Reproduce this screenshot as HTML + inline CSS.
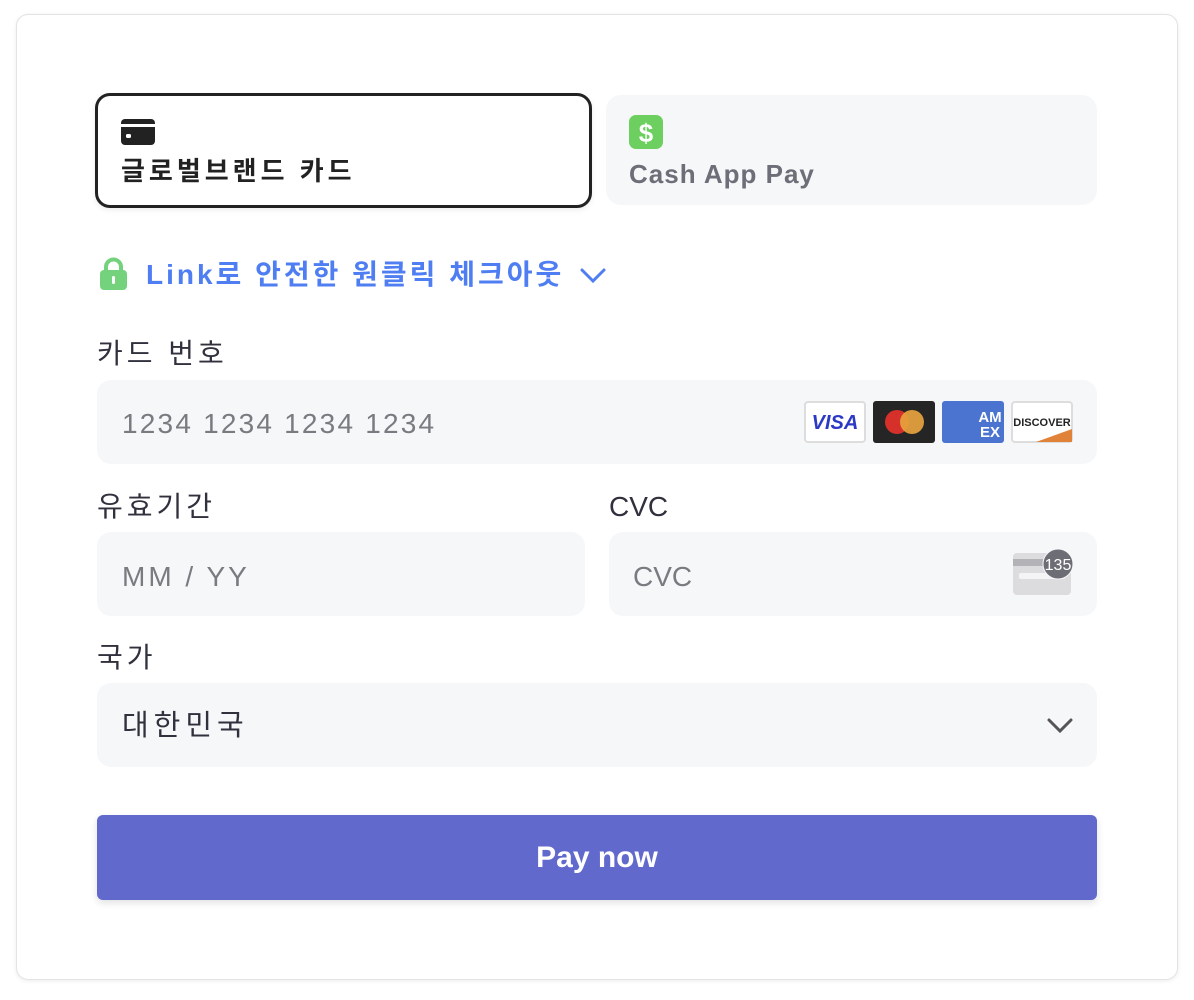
<!DOCTYPE html>
<html><head><meta charset="utf-8"><style>
*{box-sizing:border-box;margin:0;padding:0}
body{width:1194px;height:1000px;background:#fff;font-family:"Liberation Sans","Noto Sans CJK KR",sans-serif;position:relative;overflow:hidden}
.a{position:absolute}
.card{left:16px;top:14px;width:1162px;height:966px;border:1px solid #e3e3e6;border-radius:12px;box-shadow:0 1px 4px rgba(0,0,0,.08)}
.inp{background:#f6f7f9;border-radius:14px;height:84px}
.lbl{font-size:28px;color:#30313d;line-height:1;letter-spacing:4px}
.ph{font-size:28px;color:#7a7b80;line-height:1}
</style></head><body>
<div class="a card"></div>
<div class="a" style="left:95px;top:93px;width:497px;height:115px;border:3px solid #222;border-radius:15px;box-shadow:0 2px 6px rgba(0,0,0,.08)"></div>
<svg class="a" style="left:121px;top:119px" width="34" height="26" viewBox="0 0 34 26"><rect x="0" y="0" width="34" height="26" rx="4" fill="#222"/><rect x="0" y="5" width="34" height="3" fill="#fff"/><rect x="5" y="15" width="5" height="4" rx="1.5" fill="#fff"/></svg>
<div class="a" style="left:121px;top:157px;font-size:26px;font-weight:bold;color:#222;line-height:1.1;letter-spacing:4px">글로벌브랜드 카드</div>
<div class="a" style="left:606px;top:95px;width:491px;height:110px;background:#f6f7f9;border-radius:15px"></div>
<svg class="a" style="left:629px;top:115px" width="34" height="34" viewBox="0 0 34 34"><rect width="34" height="34" rx="7" fill="#6ccf5f"/><text x="17" y="27" font-size="26" font-weight="bold" fill="#fff" text-anchor="middle" font-family="Liberation Sans">$</text></svg>
<div class="a" style="left:629px;top:160px;font-size:26px;font-weight:bold;color:#6d6e78;line-height:1.1;letter-spacing:1px">Cash App Pay</div>
<svg class="a" style="left:99px;top:257px" width="29" height="33" viewBox="0 0 29 33"><path d="M7 14V10a7.5 7.5 0 0 1 15 0v4" stroke="#74d17c" stroke-width="4" fill="none"/><rect x="1" y="13" width="27" height="20" rx="4" fill="#74d17c"/><rect x="13" y="19" width="3" height="8" rx="1.5" fill="#fff"/></svg>
<div class="a" style="left:146px;top:260px;font-size:28px;font-weight:bold;color:#4f7ef3;line-height:1.1;letter-spacing:3px">Link로 안전한 원클릭 체크아웃</div>
<svg class="a" style="left:579px;top:266px" width="28" height="18" viewBox="0 0 28 18"><path d="M3 4l11 11 11-11" stroke="#4f7ef3" stroke-width="3" fill="none" stroke-linecap="round"/></svg>
<div class="a lbl" style="left:97px;top:340px">카드 번호</div>
<div class="a inp" style="left:97px;top:380px;width:1000px"></div>
<div class="a ph" style="left:122px;top:410px;letter-spacing:2.2px">1234 1234 1234 1234</div>
<svg class="a" style="left:804px;top:401px" width="270" height="43" viewBox="0 0 270 43">
<rect x="1" y="1" width="60" height="40" rx="3" fill="#fff" stroke="#ddd" stroke-width="2"/>
<text x="31" y="28" font-size="20" font-weight="bold" font-style="italic" fill="#2c39c4" text-anchor="middle" font-family="Liberation Sans">VISA</text>
<rect x="69" y="0" width="62" height="42" rx="3" fill="#252525"/>
<circle cx="93" cy="21" r="12" fill="#d6302a"/><circle cx="108" cy="21" r="12" fill="#e6a33d" fill-opacity=".92"/>
<rect x="138" y="0" width="62" height="42" rx="3" fill="#4b73d0"/>
<text x="186" y="21" font-size="15" font-weight="bold" fill="#fff" text-anchor="middle" font-family="Liberation Sans">AM</text>
<text x="186" y="36" font-size="15" font-weight="bold" fill="#fff" text-anchor="middle" font-family="Liberation Sans">EX</text>
<rect x="208" y="1" width="60" height="40" rx="3" fill="#fff" stroke="#ddd" stroke-width="2"/>
<path d="M232 41 L268 28 L268 41Z" fill="#e08238"/>
<text x="238" y="25" font-size="11" font-weight="bold" fill="#222" text-anchor="middle" font-family="Liberation Sans">DISCOVER</text>
</svg>
<div class="a lbl" style="left:97px;top:493px">유효기간</div>
<div class="a lbl" style="left:609px;top:493px;letter-spacing:0">CVC</div>
<div class="a inp" style="left:97px;top:532px;width:488px"></div>
<div class="a inp" style="left:609px;top:532px;width:488px"></div>
<div class="a ph" style="left:122px;top:563px;letter-spacing:3px">MM / YY</div>
<div class="a ph" style="left:633px;top:563px">CVC</div>
<svg class="a" style="left:1012px;top:549px" width="64" height="46" viewBox="0 0 64 46"><rect x="1" y="4" width="58" height="42" rx="4" fill="#dcdcdf"/><rect x="1" y="10" width="58" height="7" fill="#b3b3b7"/><rect x="7" y="24" width="46" height="6" rx="2" fill="#f4f4f6"/><circle cx="46" cy="15" r="15" fill="#6d6e75" stroke="#f6f7f9" stroke-width="1"/><text x="46" y="21" font-size="16" fill="#fff" text-anchor="middle" font-family="Liberation Sans">135</text></svg>
<div class="a lbl" style="left:97px;top:644px">국가</div>
<div class="a inp" style="left:97px;top:683px;width:1000px"></div>
<div class="a" style="left:122px;top:712px;font-size:29px;color:#30313d;line-height:1;letter-spacing:5px">대한민국</div>
<svg class="a" style="left:1046px;top:717px" width="28" height="18" viewBox="0 0 28 18"><path d="M3 3l11 11 11-11" stroke="#555" stroke-width="3" fill="none" stroke-linecap="round"/></svg>
<div class="a" style="left:97px;top:815px;width:1000px;height:85px;background:#6269cc;border-radius:6px;box-shadow:0 3px 8px rgba(0,0,0,.12);color:#fff;font-size:30px;font-weight:bold;text-align:center;line-height:85px">Pay now</div>
</body></html>
